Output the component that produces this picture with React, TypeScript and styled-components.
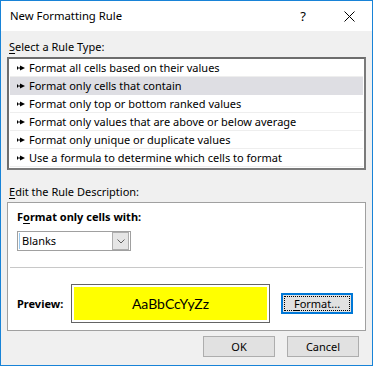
import React from 'react';
import styled, { createGlobalStyle } from 'styled-components';

const GlobalStyle = createGlobalStyle`
  html, body {
    margin: 0;
    padding: 0;
    background: #ffffff;
  }
  body {
    font-family: "Noto Sans", "Liberation Sans", sans-serif;
    font-size: 11px;
    color: #000000;
  }
`;

const Window = styled.div`
  width: 373px;
  height: 366px;
  box-sizing: border-box;
  border: 1px solid #1883d7;
  background: #f0f0f0;
  display: flex;
  flex-direction: column;
`;

const TitleBar = styled.div`
  height: 30px;
  background: #ffffff;
  display: flex;
  align-items: center;
  padding-left: 9px;
`;

const Title = styled.div`
  flex: 1;
  font-size: 11.3px;
  line-height: 16px;
`;

const HelpGlyph = styled.div`
  width: 14px;
  font-size: 13px;
  line-height: 16px;
  margin-right: 16px;
  text-align: center;
`;

const CloseButton = styled.div`
  width: 46px;
  height: 30px;
  display: flex;
  align-items: center;
  justify-content: center;
`;

const Body = styled.div`
  flex: 1;
  padding: 0 6px;
  display: flex;
  flex-direction: column;
`;

const SectionLabel = styled.div<{ top: number }>`
  margin-top: ${p => p.top}px;
  margin-left: 2px;
  line-height: 16px;
  margin-bottom: 2px;

  u {
    text-decoration-thickness: 1px;
    text-underline-offset: 2px;
  }
`;

const ListBox = styled.div`
  background: #ffffff;
  border: 2px solid #7a7a7a;
  border-top-color: #6d6d6d;
  border-left-color: #6d6d6d;
  padding: 0 1px 1px 1px;
  display: flex;
  flex-direction: column;
`;

const RuleRow = styled.div<{ selected?: boolean }>`
  height: 18px;
  box-sizing: border-box;
  display: flex;
  align-items: center;
  padding-left: 7px;
  gap: 4px;
  background: ${p => (p.selected ? '#dedee3' : '#ffffff')};
  border-bottom: 1px solid ${p => (p.selected ? '#dedee3' : '#eeeeee')};
  line-height: 16px;
  white-space: nowrap;
`;

const Arrow = () => (
  <svg width="8" height="6" viewBox="0 0 8 6">
    <rect x="0" y="1.5" width="1" height="3" fill="#000" />
    <rect x="1" y="2.5" width="3" height="1" fill="#000" />
    <polygon points="3,0.5 8,3 3,5.5" fill="#000" />
  </svg>
);

const DescBox = styled.div`
  background: #ffffff;
  border: 1px solid #a0a0a0;
  display: flex;
  flex-direction: column;
`;

const ConditionSection = styled.div`
  padding: 6px 9px 16px 9px;
  display: flex;
  flex-direction: column;
  gap: 6px;
`;

const BoldLabel = styled.div`
  font-weight: 700;
  line-height: 16px;

  u {
    text-decoration-thickness: 1px;
    text-underline-offset: 2px;
  }
`;

const Select = styled.div`
  width: 114px;
  height: 20px;
  box-sizing: border-box;
  border: 1px solid #a0a0a0;
  display: flex;
  align-items: center;
  background: #ffffff;
`;

const Caret = styled.span`
  width: 1px;
  height: 16px;
  background: #99c9ef;
  margin-left: 1px;
`;

const SelectValue = styled.span`
  flex: 1;
  padding-left: 2px;
  line-height: 16px;
`;

const SelectButton = styled.span`
  width: 17px;
  height: 18px;
  box-sizing: border-box;
  border: 1px solid #adadad;
  background: #e5e5e5;
  display: flex;
  align-items: center;
  justify-content: center;
  margin-right: 1px;
`;

const Divider = styled.div`
  height: 1px;
  background: #c8c8c8;
  margin: 0 2px;
`;

const PreviewSection = styled.div`
  padding: 16px 10px 7px 9px;
  display: flex;
  align-items: center;
`;

const PreviewLabel = styled(BoldLabel)`
  width: 54px;
`;

const PreviewFrame = styled.div`
  width: 199px;
  height: 39px;
  box-sizing: border-box;
  border: 1px solid #646464;
  padding: 2px;
  background: #ffffff;
`;

const PreviewFill = styled.div<{ fill: string }>`
  height: 100%;
  background: ${p => p.fill};
  display: flex;
  align-items: center;
  justify-content: center;
  font-family: Lato, "Liberation Sans", sans-serif;
  font-size: 14px;
`;

const Button = styled.div<{ focused?: boolean }>`
  width: 72px;
  height: 21px;
  box-sizing: border-box;
  border: ${p => (p.focused ? '2px solid #0078d7' : '1px solid #adadad')};
  background: #e1e1e1;
  display: flex;
  align-items: center;
  justify-content: center;
  line-height: 16px;
  outline: ${p => (p.focused ? '1px dotted #000000' : 'none')};
  outline-offset: -4px;

  u {
    text-decoration-thickness: 1px;
    text-underline-offset: 2px;
  }
`;

const FormatButton = styled(Button)`
  margin-left: 11px;
`;

const Footer = styled.div`
  display: flex;
  justify-content: flex-end;
  gap: 12px;
  padding: 5px 7px 0 0;
`;

const rules = [
  'Format all cells based on their values',
  'Format only cells that contain',
  'Format only top or bottom ranked values',
  'Format only values that are above or below average',
  'Format only unique or duplicate values',
  'Use a formula to determine which cells to format',
];

const App: React.FC = () => {
  const selected = 1;

  return (
    <>
      <GlobalStyle />
      <Window>
        <TitleBar>
          <Title>New Formatting Rule</Title>
          <HelpGlyph>?</HelpGlyph>
          <CloseButton>
            <svg width="11" height="11" viewBox="0 0 11 11">
              <path d="M0.5 0.5 L10.5 10.5 M10.5 0.5 L0.5 10.5" stroke="#000" strokeWidth="1" />
            </svg>
          </CloseButton>
        </TitleBar>

        <Body>
          <SectionLabel top={8}>
            <u>S</u>elect a Rule Type:
          </SectionLabel>
          <ListBox>
            {rules.map((rule, i) => (
              <RuleRow key={rule} selected={i === selected}>
                <Arrow />
                {rule}
              </RuleRow>
            ))}
          </ListBox>

          <SectionLabel top={14}>
            <u>E</u>dit the Rule Description:
          </SectionLabel>
          <DescBox>
            <ConditionSection>
              <BoldLabel>
                F<u>o</u>rmat only cells with:
              </BoldLabel>
              <Select>
                <Caret />
                <SelectValue>Blanks</SelectValue>
                <SelectButton>
                  <svg width="8" height="5" viewBox="0 0 8 5">
                    <path d="M0.5 0.5 L4 4 L7.5 0.5" stroke="#606060" strokeWidth="1" fill="none" />
                  </svg>
                </SelectButton>
              </Select>
            </ConditionSection>
            <Divider />
            <PreviewSection>
              <PreviewLabel>Preview:</PreviewLabel>
              <PreviewFrame>
                <PreviewFill fill="#ffff00">AaBbCcYyZz</PreviewFill>
              </PreviewFrame>
              <FormatButton focused>
                <u>F</u>ormat...
              </FormatButton>
            </PreviewSection>
          </DescBox>

          <Footer>
            <Button>OK</Button>
            <Button>Cancel</Button>
          </Footer>
        </Body>
      </Window>
    </>
  );
};

export default App;
